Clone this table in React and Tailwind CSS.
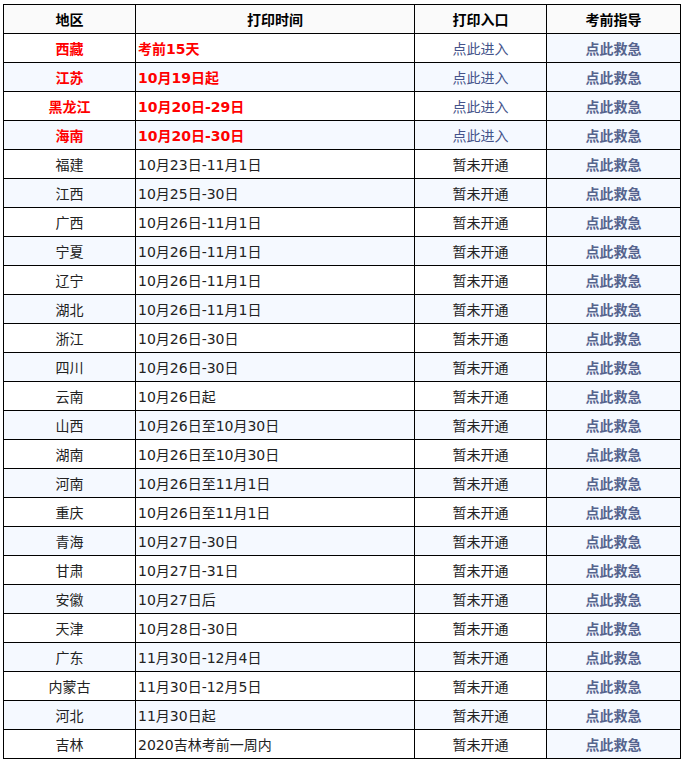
import React from 'react';

const hot = [
  ['西藏', '考前15天'],
  ['江苏', '10月19日起'],
  ['黑龙江', '10月20日-29日'],
  ['海南', '10月20日-30日'],
];

const rows = [
  ['福建', '10月23日-11月1日'],
  ['江西', '10月25日-30日'],
  ['广西', '10月26日-11月1日'],
  ['宁夏', '10月26日-11月1日'],
  ['辽宁', '10月26日-11月1日'],
  ['湖北', '10月26日-11月1日'],
  ['浙江', '10月26日-30日'],
  ['四川', '10月26日-30日'],
  ['云南', '10月26日起'],
  ['山西', '10月26日至10月30日'],
  ['湖南', '10月26日至10月30日'],
  ['河南', '10月26日至11月1日'],
  ['重庆', '10月26日至11月1日'],
  ['青海', '10月27日-30日'],
  ['甘肃', '10月27日-31日'],
  ['安徽', '10月27日后'],
  ['天津', '10月28日-30日'],
  ['广东', '11月30日-12月4日'],
  ['内蒙古', '11月30日-12月5日'],
  ['河北', '11月30日起'],
  ['吉林', '2020吉林考前一周内'],
];

const cell = 'border border-black h-[26px] px-0 pt-[2px] pb-0 leading-[26px] whitespace-nowrap overflow-hidden';

export default function App() {
  const all = [...hot.map((r) => [...r, true]), ...rows.map((r) => [...r, false])];
  return (
    <div className="bg-white w-[684px] h-[762px] overflow-hidden pt-[4px] pl-[3px]"
      style={{ fontFamily: '"DejaVu Sans", "Noto Sans CJK SC", sans-serif' }}>
      <table className="border-collapse table-fixed w-[677px] text-[14px] text-[#222]">
        <colgroup>
          <col className="w-[132px]" />
          <col className="w-[279px]" />
          <col className="w-[132px]" />
          <col className="w-[134px]" />
        </colgroup>
        <thead>
          <tr className="bg-[#fafafa] font-bold text-black">
            <th className={`${cell} text-center`}>地区</th>
            <th className={`${cell} text-center`}>打印时间</th>
            <th className={`${cell} text-center`}>打印入口</th>
            <th className={`${cell} text-center`}>考前指导</th>
          </tr>
        </thead>
        <tbody>
          {all.map(([area, time, open], i) => (
            <tr key={area} className={i % 2 === 1 ? 'bg-[#f5f9ff]' : 'bg-white'}>
              <td className={`${cell} text-center ${open ? 'text-[#ff0000] font-bold' : ''}`}>{area}</td>
              <td className={`${cell} pl-[2px] ${open ? 'text-[#ff0000] font-bold' : ''}`}>{time}</td>
              <td className={`${cell} text-center ${open ? 'text-[#44538a]' : ''}`}>{open ? '点此进入' : '暂未开通'}</td>
              <td className={`${cell} text-center font-bold text-[#56648e] bg-[#f5f9ff]`}>点此救急</td>
            </tr>
          ))}
        </tbody>
      </table>
    </div>
  );
}
